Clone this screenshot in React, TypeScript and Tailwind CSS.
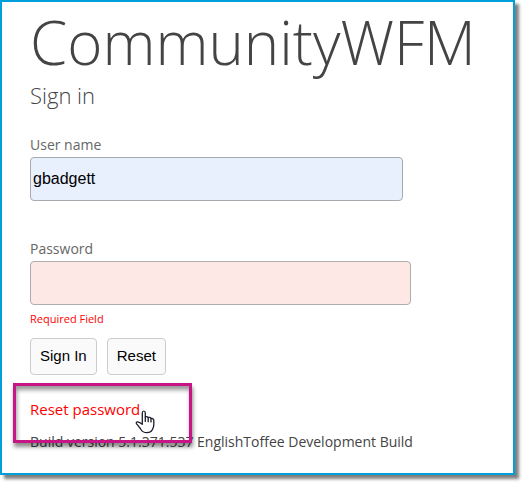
import { useState } from "react";

function HandCursor() {
  return (
    <svg
      className="pointer-events-none absolute top-[13px] left-[105px] h-[24px] w-[20px]"
      viewBox="0 0 20 26"
      preserveAspectRatio="none"
      fill="#ffffff"
      stroke="#1c1c2c"
      strokeWidth="1.3"
      strokeLinejoin="round"
      strokeLinecap="round"
      aria-hidden="true"
    >
      <path d="M7.3 15.5V3.2C7.3 1.8 8 1.1 8.8 1.1S10.3 1.8 10.3 3.2V7.6C10.8 6.8 12.8 7 13.2 8.4C13.8 7.6 15.6 8 16 9.3C16.7 8.8 18.8 9.3 18.8 11.2V16C18.8 18.5 17.9 20 17.3 21.5C16.2 23.8 14 24.6 11.8 24.6C9 24.6 7 23 5.8 20.8C4.8 18.8 3.2 17.2 1.6 15C.8 13.7 1.5 12.7 2.6 12.8C4.6 13 6 14.2 7.3 15.5Z" />
      <path d="M10.3 7.6V12.4M13.2 8.6V12.6M16 9.5V13" fill="none" />
    </svg>
  );
}

export default function App() {
  const [userName, setUserName] = useState("gbadgett");
  const [password, setPassword] = useState("");

  return (
    <div className="min-h-screen bg-white pr-[11px] font-['Open_Sans','Noto_Sans',sans-serif] text-[#444444]">
      <main className="border-2 border-[#009fdc] bg-white px-7 pb-[21px] shadow-[4px_4px_3px_rgba(0,0,0,0.5)]">
        <h1 className="text-[60px] leading-[80px] font-light">CommunityWFM</h1>
        <h2 className="text-[22px] leading-[26px] font-light">Sign in</h2>

        <form onSubmit={(event) => event.preventDefault()}>
          <div className="mt-[27px] flex flex-col">
            <label htmlFor="user" className="text-sm leading-5 text-[#666666]">
              User name
            </label>
            <input
              id="user"
              type="text"
              value={userName}
              onChange={(event) => setUserName(event.target.value)}
              className="mt-[2px] h-11 w-[373px] rounded border border-[#a9a9b0] bg-[#e8effd] px-[2px] font-['Liberation_Sans',Arial,sans-serif] text-base text-black outline-none"
            />
          </div>

          <div className="mt-[38px] flex flex-col">
            <label htmlFor="password" className="text-sm leading-5 text-[#666666]">
              Password
            </label>
            <input
              id="password"
              type="password"
              value={password}
              onChange={(event) => setPassword(event.target.value)}
              aria-describedby="password-error"
              className="mt-[2px] h-11 w-[381px] rounded border border-[#adadad] bg-[#fde8e6] px-[2px] text-base text-black outline-none"
            />
            <p id="password-error" className="mt-1 text-[11px] leading-5 text-[#ff0000]">
              Required Field
            </p>
          </div>

          <div className="mt-[9px] flex gap-[10px] font-['Liberation_Sans',Arial,sans-serif] text-[15px] text-black">
            <button type="submit" className="h-[37px] rounded border border-[#cccccc] bg-[#fafafa] px-[9px]">
              Sign In
            </button>
            <button
              type="button"
              onClick={() => setUserName("")}
              className="h-[37px] rounded border border-[#cccccc] bg-[#fafafa] px-[9px]"
            >
              Reset
            </button>
          </div>
        </form>

        <div className="relative mt-[22px]">
          <a href="#reset-password" className="block w-fit text-[15px] leading-6 text-[#ff0000]">
            Reset password
          </a>
          <p className="mt-[11px] text-sm leading-5">
            Build version 5.1.371.537 EnglishToffee Development Build
          </p>
          <div className="pointer-events-none absolute -top-[14px] -left-[17px] h-[60px] w-[179px] border-[3px] border-[#c71585] shadow-[1px_4px_4px_rgba(0,0,0,0.45),inset_1px_4px_4px_rgba(0,0,0,0.4)]" />
          <HandCursor />
        </div>
      </main>
    </div>
  );
}
